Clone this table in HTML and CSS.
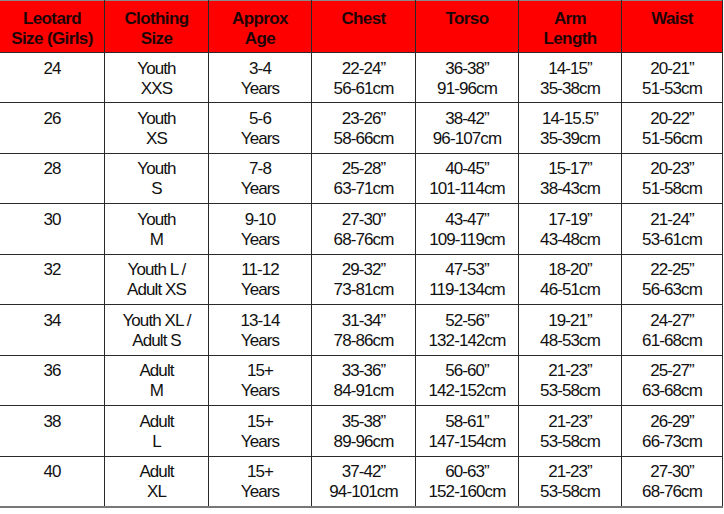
FILE: index.html
```html
<!DOCTYPE html>
<html>
<head>
<meta charset="utf-8">
<link rel="stylesheet" href="styles.css">
</head>
<body>
<table class="size-table">
  <colgroup>
    <col class="c1"><col class="c2"><col class="c3"><col class="c4"><col class="c5"><col class="c6"><col class="c7">
  </colgroup>
  <thead>
    <tr>
      <th>Leotard<br>Size (Girls)</th>
      <th>Clothing<br>Size</th>
      <th>Approx<br>Age</th>
      <th>Chest</th>
      <th>Torso</th>
      <th>Arm<br>Length</th>
      <th>Waist</th>
    </tr>
  </thead>
  <tbody>
    <tr><td>24</td><td>Youth<br>XXS</td><td>3-4<br>Years</td><td>22-24”<br>56-61cm</td><td>36-38”<br>91-96cm</td><td>14-15”<br>35-38cm</td><td>20-21”<br>51-53cm</td></tr>
    <tr><td>26</td><td>Youth<br>XS</td><td>5-6<br>Years</td><td>23-26”<br>58-66cm</td><td>38-42”<br>96-107cm</td><td>14-15.5”<br>35-39cm</td><td>20-22”<br>51-56cm</td></tr>
    <tr><td>28</td><td>Youth<br>S</td><td>7-8<br>Years</td><td>25-28”<br>63-71cm</td><td>40-45”<br>101-114cm</td><td>15-17”<br>38-43cm</td><td>20-23”<br>51-58cm</td></tr>
    <tr><td>30</td><td>Youth<br>M</td><td>9-10<br>Years</td><td>27-30”<br>68-76cm</td><td>43-47”<br>109-119cm</td><td>17-19”<br>43-48cm</td><td>21-24”<br>53-61cm</td></tr>
    <tr><td>32</td><td>Youth L /<br>Adult XS</td><td>11-12<br>Years</td><td>29-32”<br>73-81cm</td><td>47-53”<br>119-134cm</td><td>18-20”<br>46-51cm</td><td>22-25”<br>56-63cm</td></tr>
    <tr><td>34</td><td>Youth XL /<br>Adult S</td><td>13-14<br>Years</td><td>31-34”<br>78-86cm</td><td>52-56”<br>132-142cm</td><td>19-21”<br>48-53cm</td><td>24-27”<br>61-68cm</td></tr>
    <tr><td>36</td><td>Adult<br>M</td><td>15+<br>Years</td><td>33-36”<br>84-91cm</td><td>56-60”<br>142-152cm</td><td>21-23”<br>53-58cm</td><td>25-27”<br>63-68cm</td></tr>
    <tr><td>38</td><td>Adult<br>L</td><td>15+<br>Years</td><td>35-38”<br>89-96cm</td><td>58-61”<br>147-154cm</td><td>21-23”<br>53-58cm</td><td>26-29”<br>66-73cm</td></tr>
    <tr><td>40</td><td>Adult<br>XL</td><td>15+<br>Years</td><td>37-42”<br>94-101cm</td><td>60-63”<br>152-160cm</td><td>21-23”<br>53-58cm</td><td>27-30”<br>68-76cm</td></tr>
  </tbody>
</table>
</body>
</html>
```
FILE: styles.css
```css
html, body {
  margin: 0;
  padding: 0;
  background: #ffffff;
}
body {
  font-family: "Liberation Sans", Arial, sans-serif;
  color: #111111;
}
.size-table {
  border-collapse: collapse;
  table-layout: fixed;
  width: 723px;
  margin-left: -1px;
}
.c1 { width: 105px; }
.c2 { width: 104px; }
.c3 { width: 103px; }
.c4 { width: 104px; }
.c5 { width: 103px; }
.c6 { width: 103px; }
.c7 { width: 101px; }
.size-table th,
.size-table td {
  border: 1px solid #2a2a2a;
  text-align: center;
  vertical-align: top;
  font-size: 17px;
  line-height: 20px;
  white-space: nowrap;
  overflow: hidden;
}
.size-table th {
  background: #fe0000;
  color: #1e0505;
  font-weight: bold;
  letter-spacing: -0.6px;
  padding: 8px 0 0;
  height: 43px;
  border-top-color: #8a8a8a;
}
.size-table td {
  letter-spacing: -0.9px;
  padding: 5.5px 0 0;
  height: 43.94px;
}
.size-table tbody tr:last-child td {
  border-bottom: 2px solid #777777;
}
```
